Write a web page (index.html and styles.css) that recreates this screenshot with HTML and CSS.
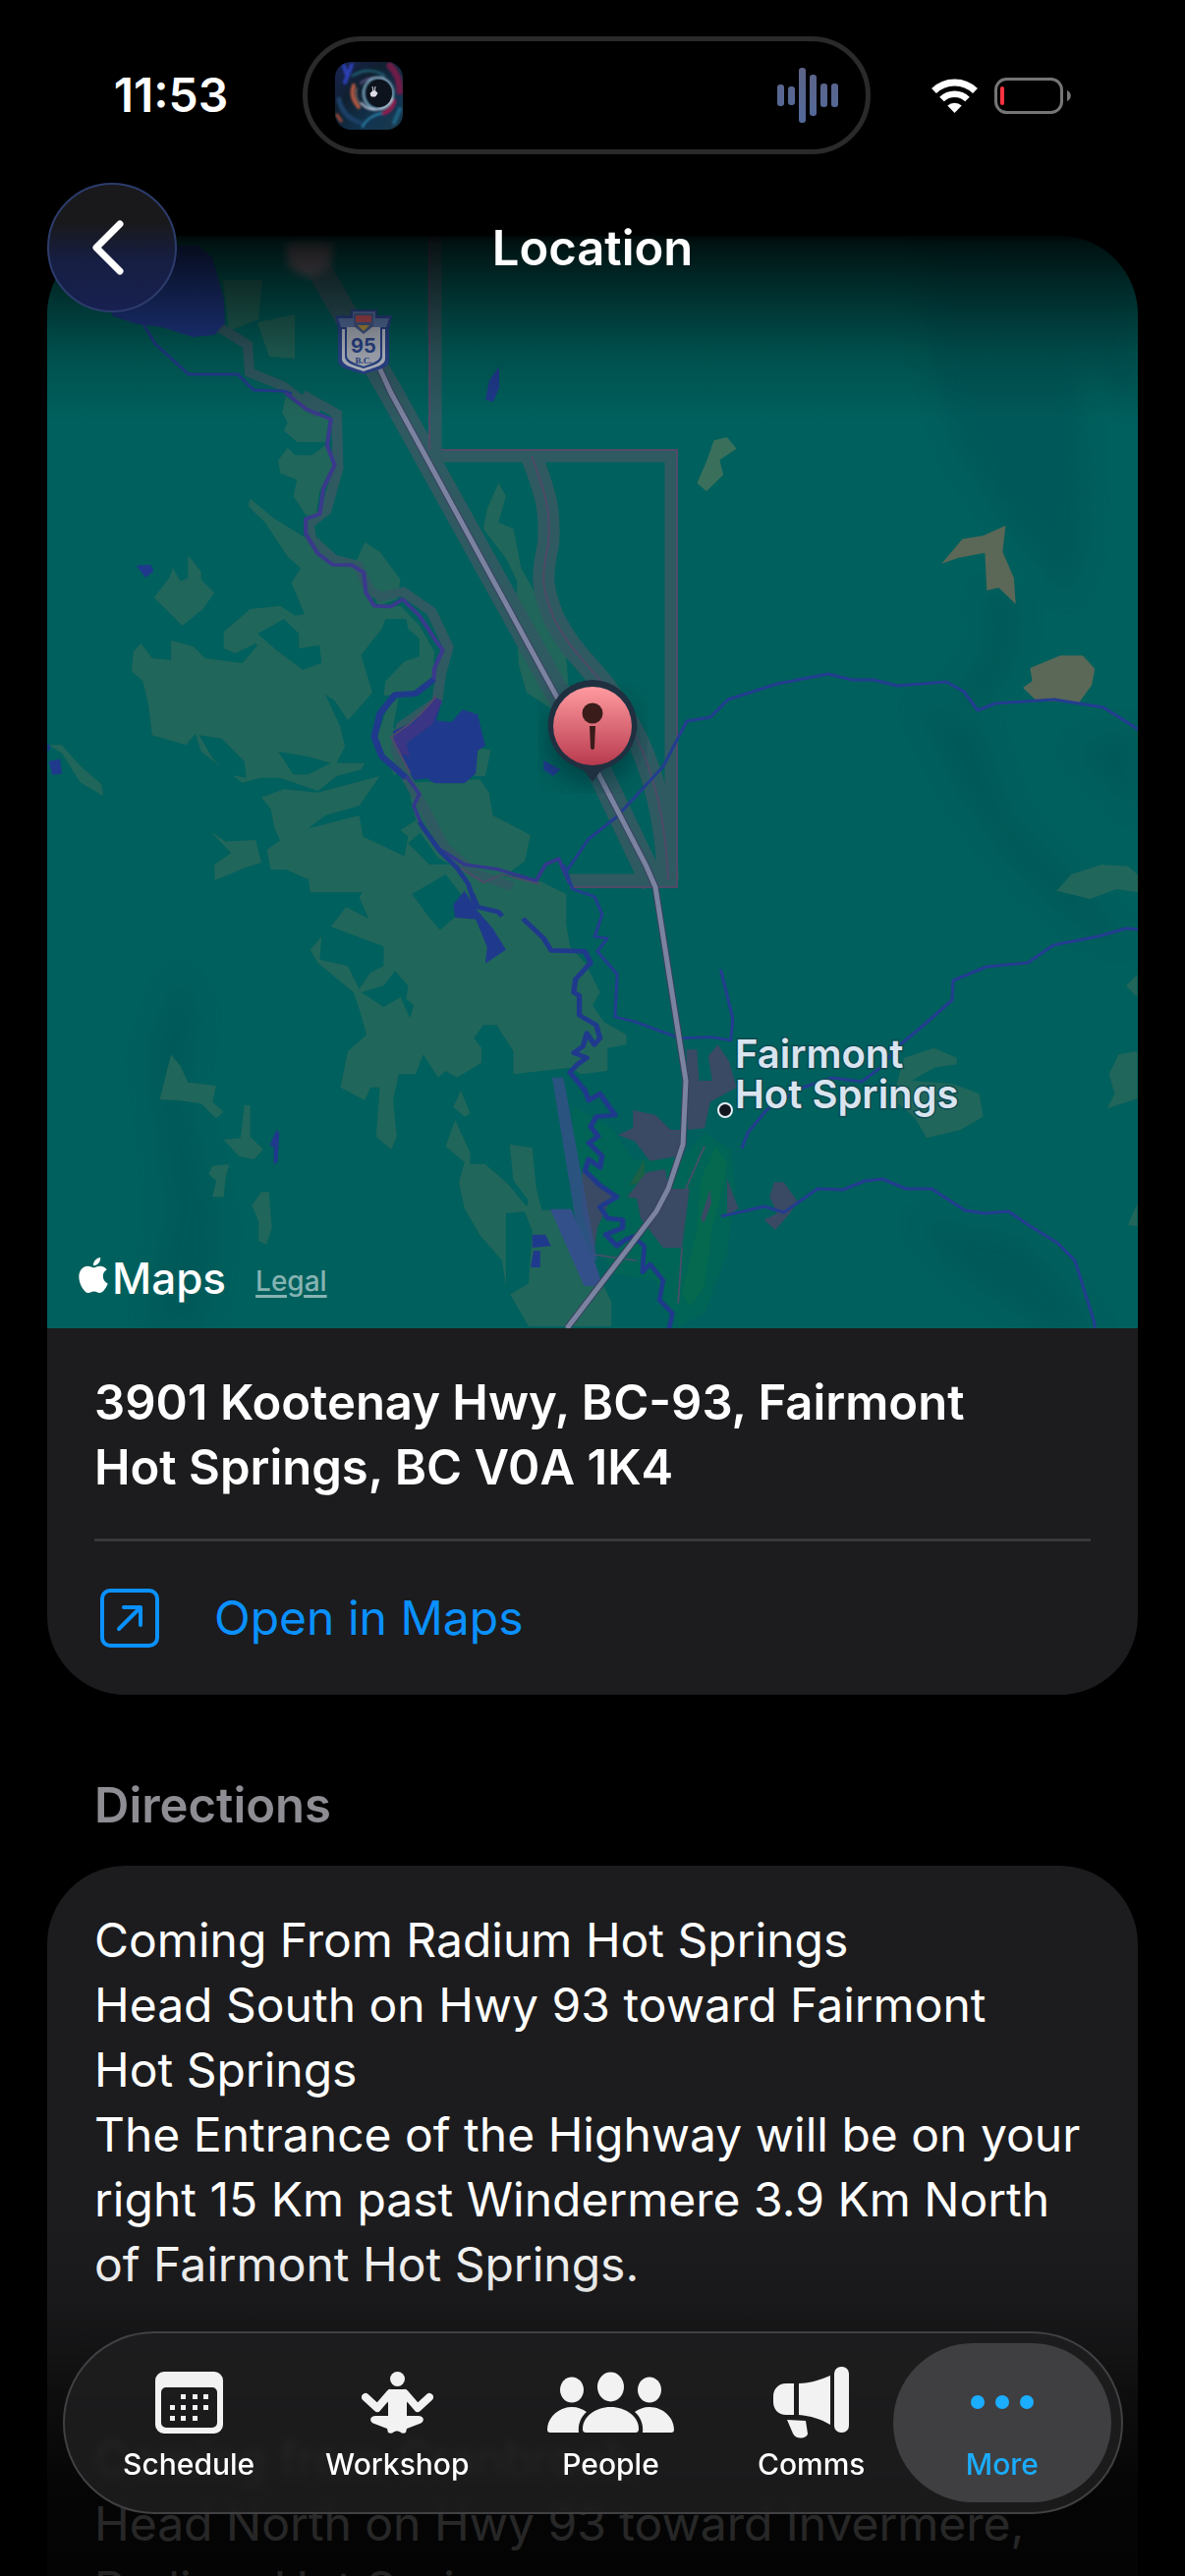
FILE: index.html
```html
<!DOCTYPE html>
<html lang="en">
<head>
    <meta charset="UTF-8">
    <meta name="viewport" content="width=device-width, initial-scale=1.0">
    <title>Location</title>
    <link rel="stylesheet" href="styles.css">
</head>
<body>
<div class="screen">

    <!-- Status bar and title, float over the scrolled content -->
    <header class="top">
        <div class="status">
            <span class="time">11:53</span>
            <div class="island">
                <svg class="album" viewBox="0 0 69 69" aria-hidden="true">
                    <defs>
                        <linearGradient id="art" x1="0" y1="0" x2="1" y2="1">
                            <stop offset="0" stop-color="#1a2456"/>
                            <stop offset="0.35" stop-color="#10202f"/>
                            <stop offset="0.7" stop-color="#123450"/>
                            <stop offset="1" stop-color="#1c3a4c"/>
                        </linearGradient>
                        <filter id="artBlur"><feGaussianBlur stdDeviation="1.2"/></filter>
                    </defs>
                    <rect width="69" height="69" fill="url(#art)"/>
                    <g filter="url(#artBlur)" fill="none" stroke-linecap="round">
                        <path d="M9 4l3 10M17 3l-7 18" stroke="#2c3fb4" stroke-width="4"/>
                        <path d="M56 4c8 8 10 18 10 26" stroke="#6c1a46" stroke-width="7"/>
                        <path d="M19 24c-3 7-1 15 5 22" stroke="#b4573f" stroke-width="4"/>
                        <path d="M22 27c-2 6 0 12 4 16" stroke="#d99a80" stroke-width="1"/>
                        <path d="M4 38c2 12 10 20 22 24" stroke="#1c3f66" stroke-width="5"/>
                        <path d="M2 54l4 6" stroke="#a44a36" stroke-width="3"/>
                        <path d="M28 66c4-8 10-12 20-14" stroke="#2f86b0" stroke-width="2"/>
                        <path d="M60 62l6-14" stroke="#1f6484" stroke-width="4"/>
                        <path d="M50 52c6-2 9-8 10-12" stroke="#8c1f50" stroke-width="5"/>
                        <path d="M18 14c12-7 24-6 32 0" stroke="#1d5468" stroke-width="3"/>
                        <path d="M26 22c8-8 22-8 30 0" stroke="#5a5088" stroke-width="2"/>
                        <ellipse cx="44" cy="32" rx="15" ry="16" stroke="#8fb8cc" stroke-width="2"/>
                        <path d="M27 42c7 9 24 10 31-6" stroke="#c9d2e6" stroke-width="2"/>
                    </g>
                    <ellipse cx="45" cy="32" rx="13" ry="14" fill="#0c131c"/>
                    <path d="M38 25l1 6M41 25l-1 6M36 32c2-3 6-3 7 0l-2 3h-4z" stroke="#dcdce6" fill="#dcdce6"/>
                </svg>
                <svg class="wave" viewBox="0 0 62 56" aria-hidden="true">
                    <defs>
                        <linearGradient id="waveFill" x1="0" y1="0" x2="0" y2="56" gradientUnits="userSpaceOnUse">
                            <stop offset="0" stop-color="#5d6488"/>
                            <stop offset="1" stop-color="#52699a"/>
                        </linearGradient>
                    </defs>
                    <g fill="url(#waveFill)">
                        <rect x="0" y="17" width="7" height="22" rx="3"/>
                        <rect x="11" y="19" width="7" height="19" rx="3"/>
                        <rect x="22" y="0" width="7" height="56" rx="3"/>
                        <rect x="33" y="7" width="7" height="42" rx="3"/>
                        <rect x="44" y="16" width="7" height="24" rx="3"/>
                        <rect x="55" y="16" width="7" height="24" rx="3"/>
                    </g>
                </svg>
            </div>
            <div class="signals">
                <svg class="wifi" viewBox="0 0 47 35" aria-hidden="true">
                    <g fill="none" stroke="#fff">
                        <path d="M2.500 12.500A30 30 0 0 1 44.500 12.500" stroke-width="7"/>
                        <path d="M10.500 21A18.500 18.500 0 0 1 36.500 21" stroke-width="6.500"/>
                    </g>
                    <path d="M23.500 35l-7.200-7.500a10.500 10.500 0 0 1 14.400 0z" fill="#fff"/>
                </svg>
                <svg class="battery" viewBox="0 0 78 37" aria-hidden="true">
                    <rect x="1.500" y="1.500" width="67" height="34" rx="11" fill="none" stroke="#757575" stroke-width="3"/>
                    <rect x="6" y="9" width="4" height="19" rx="2" fill="#ff3340"/>
                    <path d="M74 13c5 2 5 9 0 11z" fill="#757575"/>
                </svg>
            </div>
        </div>

        <div class="nav">
            <button class="back" type="button" aria-label="Back">
                <svg viewBox="0 0 34 58" aria-hidden="true"><path d="M29 5L5 29l24 24" fill="none" stroke="#fff" stroke-width="7" stroke-linecap="round" stroke-linejoin="round"/></svg>
            </button>
            <h1>Location</h1>
        </div>
    </header>

    <main class="content">
        <section class="card">
            <div class="map">
                <svg viewBox="48 240 1110 1112" role="img" aria-label="Map of Fairmont Hot Springs">
                    <defs>
                        <linearGradient id="pin" x1="0" y1="0" x2="0" y2="1">
                            <stop offset="0" stop-color="#ff9ba0"/>
                            <stop offset="1" stop-color="#b83a4e"/>
                        </linearGradient>
                        <filter id="soft"><feGaussianBlur stdDeviation="12"/></filter>
                        <filter id="haze"><feGaussianBlur stdDeviation="4"/></filter>
                    </defs>
                    <rect x="48" y="240" width="1110" height="1112" fill="#00605d"/>

                    <!-- hill shading -->
                    <g fill="#013f48" opacity="0.2" filter="url(#soft)">
                        <path d="M940 240h218v180l-60-60 10 190-20 60-60-70-60-90-30-130z"/>
                        <path d="M1000 600l40 10-6 60-30 50-40-8 40-50z"/>
                        <path d="M930 712l70 30 30 90 70 70 50 60-40-10-80-70-50-70z"/>
                        <path d="M1090 760l68-20v90l-30-30z"/>
                        <path d="M180 990l24 40-14 80 34 140-14 100-60 0 20-120-20-160z"/>
                        <path d="M930 1240l110 20 80 92-60 0-90-60z"/>
                    </g>

                    <!-- farmland and forest patches -->
                    <g fill="#21665b">
                        <path d="M227 285h40l-4 40-30 12zM262 328l38-8v45l-26-2z"/>
                        <g transform="translate(40 400) scale(.383 .3333)">
                            <path d="M655 10l60 50 55 20-10 70-75 0-35-35 10-25-15-30z"/>
                            <path d="M660 168l20 22 45 0 35-30 20 60-35 80-10 70-25 5-35-60 10-50-45-20-5-40z"/>
                            <path d="M560 322L620 380 705 440 745 500 830 530 862 560 870 620 900 655 960 650 1010 710 1050 790 1045 870 990 915 915 925 920 880 970 820 1010 805 1010 750 980 720 975 690 920 690 910 720 855 800 885 915 820 1000 785 940 760 920 800 1020 812 1080 790 1130 865 1130 855 1150 790 1170 740 1215 690 1195 640 1175 590 1175 540 1190 480 1140 430 1095 415 1040 390 1075 300 1045 290 950 275 880 245 850 250 790 270 765 300 810 350 815 350 755 410 775 440 810 540 825 580 770 575 765 520 795 490 780 490 730 560 660 640 650 680 680 705 675 670 580 695 535 660 500 600 395 555 345z"/>
                            <path d="M395 495l35 50 0 25 35 40-30 50-55 50-75-85 40-60 10-30 20 40 20-10z"/>
                            <path d="M865 455l40 30 55 85-10 60-50 20-30-100-30-30z"/>
                            <path d="M25 1075l35 0 45 60 60 60 5 35-60-40-50-90z"/>
                            <path d="M590 1235l60-25 90 10 165-50-55 90-90 30-40 35-30 70-40-5-25-60-10-60z"/>
                            <path d="M850 1290l10 65 110 60 10-60-20-20 40-30 20 30-40 40 60 70 50 20 50 60-420 0-5-40-60-30-40 0-10-60 60-50z"/>
                            <path d="M955 930l-30 30-30 100 50 110 30-100-35-50z"/>
                            <path d="M980 1190l190-10 25 40 10 70 100 60-15 80-60 50-90-10-80-50-50-80-20-80z"/>
                            <path d="M455 1340l40 30 80-5 15 70-60 20-60 30-5-45 45-35z"/>
                            <path d="M1220 275l20 40-20 80 40 20 20 120 30 60 90 200 5 90 30 80-60 10-80-60-20-80-10-140 5-120-30-70-60-90 10-60z"/>
                            <path d="M1165 1085l35 5-15 80-30 0z"/>
                        </g>
                        <g transform="translate(40 880) scale(.383 .3333)">
                            <path d="M465 10l40-20 80 0-60 30-58 28z"/>
                            <path d="M1100 0L1180 30 1330 50 1400 90 1400 180 1410 250 1450 300 1490 390 1470 430 1500 480 1560 520 1560 550 1510 560 1510 630 1440 640 1410 620 1260 640 1260 570 1215 490 1180 490 1155 530 1175 560 1175 605 1110 650 1080 630 1060 650 1020 580 1000 640 955 640 940 720 950 830 935 870 895 830 905 680 880 680 865 720 800 680 820 570 870 520 850 440 835 390 740 300 720 260 750 220 745 290 820 310 850 380 880 330 915 310 915 250 775 190 815 130 875 165 850 100 870 65 800 20 740 0z"/>
                            <path d="M350 580l25 35 20 50 75 10-10 50 30 30-20 20-40-45-60-10-50-2z"/>
                            <path d="M545 735h15v95l35 40-25 30-40-10-40-50 45-5z"/>
                            <path d="M505 915l-10 40-5 60-30 0 10-50-20-20 10-25z"/>
                            <path d="M590 1000l20 0 8 110-15 50-20-10 0-60-18-50z"/>
                            <path d="M1120 690l25 70-15 10-30-30zM1105 780l20 50 20 50 0 35 40 0 60 60 50 70 5-20-40-60-10-110 60 10 10 120 15 70 55 0 40 120 60 90 30 70 0 75-220 0-20-40-40-80-10-80-60-80-40-80-15-80 15-60-50-50z"/>
                        </g>
                        <g transform="translate(560 880) scale(.383 .3333)">
                            <path d="M1345 80l40-50 80-30 70 5 30 30v50l-60-10-70 30z"/>
                            <path d="M940 590l80-30 60 30 0 20-60 10-60 40 110 10 70 30 10 70-60 40-90 25-30-60-60-60z"/>
                            <path d="M1560 570l-50 10-25 60 15 60-20 45 80-30zM1560 335l-30 35 30 35zM1560 1035l-25 65 25 5z"/>
                        </g>
                    </g>
                    <!-- clearings inside the farmland -->
                    <g fill="#00605d">
                        <g transform="translate(40 400) scale(.383 .3333)">
                            <path d="M425 1045l60 10 60 70 5 50-50-10-40-50z"/>
                            <path d="M635 1095l80 15 60 20-60 35-40 0z"/>
                            <path d="M580 735l70-45 40 45 0 45 55-10 5 55-50 20-70-60z"/>
                        </g>
                        <g transform="translate(40 880) scale(.383 .3333)">
                            <path d="M990 90l90-60 40 60-5 60-50 50-30-40z"/>
                            <path d="M855 390l60-20 30-45 35 45-5 40 20 20-10 40-25-65-45 30z"/>
                            <path d="M1240 1065l50-5 20 60-10 160-60 40z"/>
                        </g>
                    </g>
                    <g transform="translate(560 400) scale(.383 .3333)">
                        <path d="M435 145l35-10 25 35-45 35 10 45-45 50-25-25 25-65z" fill="#3a705b"/>
                        <path d="M1210 405l-8 80 30 80 5 80-45-50-32 8-5-115-70 15-45 18 55-75 55-10z" fill="#5b6857"/>
                        <path d="M1275 840l80-38 60 0 32 40-8 50-35 55-60-5-50 0-38-42 25-20z" fill="#5b6857"/>
                    </g>

                    <!-- golf course and town -->
                    <g transform="translate(560 880) scale(.383 .3333)">
                        <path d="M60 740l100 60 60 100 130 0 60-80 70 50 10 120-20 200-60 180-70 40-60-140-110-20-60-110-50-250z" fill="#006457"/>
                        <path d="M440 860l30 50-10 80-30 120-20 180-40 60-20-40 40-200 10-150z" fill="#04694f"/>
                        <path d="M250 900l-40 80 60-20 60 50 60-40-50 40-60-20-30-40z" fill="#1c6046"/>
                        <g fill="#3a4a64">
                            <path d="M362 565h28l5 95 35 0-10-75 25-35 30 50 20 80-70 45-15 80-45 5z"/>
                            <path d="M220 750l60 15 40 45 30 0-10 80-75 15-40-60-45-20 40-20z"/>
                            <path d="M255 940l50-10 10 60 55 0-20 180-50 0-60-90-10-60-25-5z"/>
                            <path d="M85 930l80 80-40 100-10 90-30-150z"/>
                            <path d="M470 960l30 90-30 20zM595 970l25 0 38 60-25 40-35 45-30-30 35-20-20-50zM425 990l-25 90 8 15 20-60z"/>
                        </g>
                        <path d="M410 860l-50 130M350 1170l-10 170M110 1190l120 20" fill="none" stroke="#45506a" stroke-width="5"/>
                        <path d="M0 1052h55l60 150 25 85-50 0z" fill="#34508a"/>
                        <path d="M5 650h30l90 560-40 0z" fill="#34508a" opacity="0.8"/>
                    </g>

                    <!-- park borders -->
                    <g fill="none" stroke="#2f5a62">
                        <path d="M443 240v224h240v432H580" stroke-width="13"/>
                        <path d="M325 275l73 125 205 370 62 130" stroke-width="25"/>
                        <path d="M541 464c12 34 20 50 17 90-8 36-6 46 6 76 12 24 24 36 50 66 26 36 62 90 66 200" stroke-width="22"/>
                        <path d="M223 333l29 18 2 28 34 14 36 28" stroke-width="10"/>
                        <path d="M700 5l90 58 4 167-32 130-45 40 5 45 60 62 65 20 30 75 30 20 60-15 75 60 45 110-20 80-10 85-95 75-15 70 30 90 40 80 60 130 80 80 100 40" transform="translate(40 400) scale(.383 .3333)" stroke-width="28"/>
                    </g>
                    <g fill="none" stroke="#514a68" stroke-width="2">
                        <path d="M437 240v218M449 458h240v445H580"/>
                        <path d="M541 464c12 34 20 50 17 90-8 36-6 46 6 76 12 24 24 36 50 66 26 36 62 90 66 200"/>
                    </g>

                    <!-- lakes -->
                    <g fill="#1f3a8c">
                        <path d="M90 250h112l14 12 12 43 1 24-11 12-22 2-31-10-25-3-25-8z"/>
                        <path d="M508 373v22l-6 14-8-2 4-20z"/>
                        <g transform="translate(40 400) scale(.383 .3333)">
                            <path d="M1050 930l20 10-15 60 40 5 30-38 40 15 20 95-20 15-5 70-30 30-80 0-20-15-35 5-50-110-5-40 40-20 50-40z"/>
                            <path d="M1050 930l20 10-25 70-70 60 10 40-30-10-15-40 10-30 45-20z" fill="#3a3584"/>
                            <path d="M258 527l38-3 8 20-22 20zM1340 1122l45 28-20 20-25-20zM22 1070l8 10-8 20zM25 1125l30-8 5 45-25 5z"/>
                        </g>
                        <g transform="translate(40 880) scale(.383 .3333)">
                            <path d="M1130 80l30 55 45 60 35 65-55 42 5-50-30-85-55-5-5-40z"/>
                            <path d="M630 810l8 10-5 90-10 5 0-50-10-10zM1310 1130l35 0 15 35-50 5zM1313 1180h18v50h-25z"/>
                        </g>
                    </g>

                    <!-- rivers -->
                    <g fill="none" stroke="#233d90" stroke-width="3" stroke-linejoin="round">
                        <path d="M146 330l12 20 34 31 50 0 16 16 30 1 9 3"/>
                        <path d="M577 886l22-32 28-22 48-52 24-46 24-4 18-18 50-16 52-10 24 6 22 0 24 6 50-4 18 10 14 19 18-7 60-4 50 8 38 24"/>
                        <path d="M1158 946l-12-1-28 8-46 9-26 18-42 4-34 14-1 20-32 28-24 20-16 20-20 15-30-4-30 10-36 22-20 24-6 16"/>
                        <path d="M734 1238l44-10 20 6 34-24 26 1 22-9 18-2 24 10 26 0 34 22 20 3 24-2 24 16 26 16 18 18 20 64 1 40"/>
                    </g>
                    <g transform="translate(40 400) scale(.383 .3333)" fill="none" stroke-linejoin="round">
                        <path d="M655 0L710 50 775 80 765 160 785 220 755 290 745 370 708 385 708 430 740 490 780 525 830 525 862 548 868 610 890 650 935 652 965 630 1010 680 1050 750 1072 785 1050 840 1048 880" stroke="#3a3a8c" stroke-width="11"/>
                        <path d="M1048 875L1000 918 945 922 905 980 890 1050 910 1110 975 1175" stroke="#1f3a8c" stroke-width="18"/>
                        <path d="M975 1170L1010 1225 995 1260 1020 1330 1060 1390 1130 1440 1220 1455 1320 1490 1345 1440 1380 1422 1410 1500" stroke="#33398c" stroke-width="10"/>
                        <path d="M1010 1310L1065 1400 1110 1450 1140 1500 1160 1570" stroke="#1f3a8c" stroke-width="13"/>
                        <path d="M1055 925L1030 960 985 1010 935 1050 985 1160 M1120 1450L1180 1495 1230 1470 1330 1500" stroke="#514a68" stroke-width="5"/>
                    </g>
                    <g transform="translate(40 880) scale(.383 .3333)" fill="none" stroke="#1f3a8c" stroke-width="14" stroke-linejoin="round">
                        <path d="M1150 90L1165 130 1220 145 1230 158"/>
                        <path d="M1285 165L1340 225 1360 262 1450 265 1465 300 1425 350 1420 390 1435 400 1435 460 1480 490 1490 530 1475 550 1455 515 1445 555 1420 575 1455 590 1430 610 1410 635 1450 690 1460 720 1490 700 1530 765 1480 770 1465 800 1485 830 1460 850 1495 890 1490 925 1460 900 1450 935 1490 980 1535 1015 1490 1045 1510 1080 1550 1085 1550 1110 1505 1130 1535 1165 1565 1140"/>
                    </g>
                    <g transform="translate(560 880) scale(.383 .3333)" fill="none" stroke="#1f3a8c" stroke-linejoin="round">
                        <path d="M170 1165L220 1135 250 1165 245 1245 265 1220 300 1270 290 1330 325 1370 315 1420" stroke-width="12"/>
                        <path d="M35 0L60 75 118 98 138 152 118 220 152 225 125 265 178 335 172 465 225 480 345 530 430 527 480 537 485 470 453 320" stroke="#233d90" stroke-width="8"/>
                    </g>

                    <!-- highway -->
                    <path d="M385 372l13 28 205 376 54 104 10 23 31 197-3 65-15 45-12 23-91 119" fill="none" stroke="#3b4060" stroke-width="7"/>
                    <path d="M385 372l13 28 205 376 54 104 10 23 31 197-3 65-15 45-12 23-91 119" fill="none" stroke="#7a839f" stroke-width="5"/>
                    <path d="M292 246h46v18c0 8-10 14-23 18-13-4-23-10-23-18z" fill="#7a7480" filter="url(#haze)"/>

                    <!-- highway 95 shield -->
                    <path d="M357 315h27v6h15l-3 14v32c0 8-14 10-26 14-12-4-26-6-26-14v-32l-3-14h16z" fill="#2b478f"/>
                    <path d="M359 317h23v7h14l-3 9H347l-3-9h15z" fill="#5a76a8"/>
                    <path d="M348 335h44v30c0 7-11 9-22 13-11-4-22-6-22-13z" fill="#c2c8d4"/>
                    <path d="M351 335h38v28c0 6-9 9-19 12-10-3-19-6-19-12z" fill="#2b478f"/>
                    <path d="M353 333h34v29c0 5-8 8-17 11-9-3-17-6-17-11z" fill="#b4bac6"/>
                    <path d="M360 319h20v13l-10 8-10-8z" fill="#4a5f92"/>
                    <path d="M362 321h16v7h-16z" fill="#b8505a"/>
                    <path d="M364 331h12l-6 6z" fill="#b8983e"/>
                    <text class="shield-number" x="370" y="359">95</text>
                    <text class="shield-province" x="370" y="370">B.C.</text>

                    <!-- town label -->
                    <circle cx="738" cy="1130" r="7" fill="#14161f" stroke="#e8eef6" stroke-width="2"/>
                    <text class="town" x="748" y="1087">Fairmont</text>
                    <text class="town" x="748" y="1128">Hot Springs</text>

                    <!-- pin -->
                    <circle cx="603" cy="752" r="46" fill="#02282f" opacity="0.5" filter="url(#soft)"/>
                    <path d="M603 692a46 46 0 0 1 18 88l-10 5-8 11-8-11-10-5a46 46 0 0 1 18-88z" fill="#1f3040"/>
                    <circle cx="603" cy="739" r="40" fill="url(#pin)"/>
                    <circle cx="603" cy="726" r="10.500" fill="#3a1c1a"/>
                    <path d="M600 739h6l-1 22a2 2 0 0 1-4 0z" fill="#3a1c1a"/>
                </svg>
                <div class="credits">
                    <svg class="apple" viewBox="2 0 20 24" aria-hidden="true"><path fill="#fff" d="M12.152 6.896c-.948 0-2.415-1.078-3.960-1.040-2.040.027-3.910 1.183-4.961 3.014-2.117 3.675-.546 9.103 1.519 12.090 1.013 1.454 2.208 3.090 3.792 3.039 1.520-.065 2.090-.987 3.935-.987 1.831 0 2.350.987 3.960.948 1.637-.026 2.676-1.480 3.676-2.948 1.156-1.688 1.636-3.325 1.662-3.415-.039-.013-3.182-1.221-3.220-4.857-.026-3.040 2.480-4.494 2.597-4.559-1.429-2.090-3.623-2.324-4.390-2.376-2-.156-3.675 1.090-4.610 1.090zM15.530 3.830c.843-1.012 1.400-2.427 1.245-3.830-1.207.052-2.662.805-3.532 1.818-.780.896-1.454 2.338-1.273 3.714 1.338.104 2.715-.688 3.559-1.701"/></svg>
                    <span class="brand">Maps</span>
                    <a class="legal" href="#">Legal</a>
                </div>
            </div>
            <p class="address">3901 Kootenay Hwy, BC-93, Fairmont<br>Hot Springs, BC V0A 1K4</p>
            <a class="open" href="#">
                <svg viewBox="0 0 60 60" aria-hidden="true">
                    <g fill="none" stroke="#0a91ff" stroke-width="4" stroke-linecap="round" stroke-linejoin="round">
                        <rect x="2" y="2" width="56" height="56" rx="8"/>
                        <path d="M19 41l22-22M24 19h17v18"/>
                    </g>
                </svg>
                Open in Maps
            </a>
        </section>

        <h2>Directions</h2>

        <section class="card directions">
            <p>Coming From Radium Hot Springs<br>Head South on Hwy 93 toward Fairmont<br>Hot Springs<br>The Entrance of the Highway will be on your right 15 Km past Windermere 3.9 Km North of Fairmont Hot Springs.</p>
            <p>Coming from Cranbrook<br>Head North on Hwy 93 toward Invermere, Radium Hot Springs</p>
        </section>
    </main>

    <div class="fade"></div>

    <!-- Tab bar -->
    <nav class="tabs">
        <a href="#">
            <span class="icon"><svg width="69" height="63" viewBox="0 0 69 63" aria-hidden="true">
                <path fill="#f2f2f3" fill-rule="evenodd" d="M9 0h51a9 9 0 0 1 9 9v45a9 9 0 0 1-9 9H9a9 9 0 0 1-9-9V9a9 9 0 0 1 9-9zM11 16a5 5 0 0 0-5 5v31a5 5 0 0 0 5 5h47a5 5 0 0 0 5-5V21a5 5 0 0 0-5-5z"/>
                <path fill="#f2f2f3" d="M26 23h5v5h-5zM38 23h5v5h-5zM49 23h5v5h-5zM15 34h5v5h-5zM26 34h5v5h-5zM38 34h5v5h-5zM49 34h5v5h-5zM15 45h5v5h-5zM26 45h5v5h-5zM38 45h5v5h-5z"/>
            </svg></span>
            Schedule
        </a>
        <a href="#">
            <span class="icon"><svg width="73" height="63" viewBox="0 0 73 63" aria-hidden="true">
                <circle cx="36.500" cy="7.500" r="7.500" fill="#f2f2f3"/>
                <path d="M28 18h17l4 5-3 9v13l10 0c8-1 9 6 3 8l-13 5-1 4c-2 1-4 1-5 0-2-2-6-2-8 0-1 1-3 1-5 0l-1-4-13-5c-6-2-5-9 3-8l11 0V32l-3-9z" fill="#f2f2f3"/>
                <path d="M4 26l12 11 13-15M69 26L57 37 44 22" fill="none" stroke="#f2f2f3" stroke-width="8" stroke-linecap="round" stroke-linejoin="round"/>
            </svg></span>
            Workshop
        </a>
        <a href="#">
            <span class="icon"><svg width="129" height="63" viewBox="0 0 129 63" aria-hidden="true">
                <g fill="#f2f2f3">
                    <ellipse cx="64.500" cy="15.500" rx="13.500" ry="15"/>
                    <ellipse cx="25" cy="18.500" rx="12" ry="13"/>
                    <ellipse cx="104" cy="18.500" rx="12" ry="13"/>
                    <path d="M40 62c-3 0-4-1-4-4 0-12 13-22 28.500-22S93 46 93 58c0 3-1 4-4 4z"/>
                    <path d="M3 62c-2 0-3-1-3-3 0-12 11-23 25-23 6 0 11 2 15 5-6 5-9 13-8 21z"/>
                    <path d="M126 62c2 0 3-1 3-3 0-12-11-23-25-23-6 0-11 2-15 5 6 5 9 13 8 21z"/>
                </g>
            </svg></span>
            People
        </a>
        <a href="#">
            <span class="icon"><svg width="77" height="73" viewBox="0 0 77 73" aria-hidden="true">
                <g fill="#f2f2f3">
                    <rect x="62" y="0" width="15" height="67" rx="7"/>
                    <path d="M26 17c12 0 22-4 32-8v50c-10-6-20-9-32-10zM21 17v32H13C5 49 0 43 0 36v-6c0-7 5-13 13-13zM14 54l19 1 2 13c0 5-12 7-15 0z"/>
                </g>
            </svg></span>
            Comms
        </a>
        <a class="active" href="#" aria-current="page">
            <span class="icon"><svg width="64" height="14" viewBox="0 0 64 14" aria-hidden="true">
                <g fill="#1badff">
                    <circle cx="7" cy="7" r="7"/>
                    <circle cx="32" cy="7" r="7"/>
                    <circle cx="57" cy="7" r="7"/>
                </g>
            </svg></span>
            More
        </a>
    </nav>
</div>
</body>
</html>
```

FILE: styles.css
```css
* {
    margin: 0;
    padding: 0;
    box-sizing: border-box;
}

body {
    background: #000;
    color: #fff;
    font-family: Inter, "Noto Sans", sans-serif;
    font-size: 48px;
    line-height: 66px;
}

a {
    color: inherit;
    text-decoration: none;
}

svg {
    display: block;
}

.screen {
    position: relative;
    height: 100vh;
    overflow: hidden;
}

/* Status bar and title */
.top {
    position: absolute;
    top: 0;
    left: 0;
    right: 0;
    z-index: 2;
    padding: 37px 0 110px;
    background: linear-gradient(#000 236px, rgba(0, 0, 0, 0.8) 248px, rgba(0, 0, 0, 0.5) 300px, rgba(0, 0, 0, 0.18) 360px, transparent);
}

.status {
    display: grid;
    grid-template-columns: 308fr 578fr 320fr;
    align-items: center;
}

.time {
    padding-left: 40px;
    font-size: 48px;
    font-weight: 600;
    text-align: center;
}

.island {
    display: flex;
    justify-content: space-between;
    align-items: center;
    height: 120px;
    padding: 0 28px;
    border: 5px solid #2a2a2a;
    border-radius: 60px;
}

.album {
    width: 69px;
    height: 69px;
    border-radius: 16px;
}

.wave {
    width: 62px;
    height: 56px;
}

.signals {
    display: flex;
    justify-content: center;
    align-items: center;
    gap: 17px;
    padding-right: 54px;
}

.wifi {
    width: 47px;
    height: 35px;
}

.battery {
    width: 78px;
    height: 37px;
}

.nav {
    display: grid;
    grid-template-columns: 132px 1fr 132px;
    align-items: center;
    margin-top: 29px;
    padding: 0 48px;
}

.back {
    display: flex;
    justify-content: center;
    align-items: center;
    height: 132px;
    padding-right: 8px;
    border: 2px solid #2c3c6c;
    border-radius: 50%;
    background: linear-gradient(#19191b 30%, #161e42 60%, #172050);
    cursor: pointer;
}

.back svg {
    width: 34px;
    height: 58px;
}

h1 {
    padding-top: 2px;
    font-size: 49px;
    font-weight: 600;
    text-align: center;
}

/* Cards */
.content {
    padding: 240px 48px 0;
}

.card {
    overflow: hidden;
    border-radius: 80px;
    background: #1c1c1e;
}

.map {
    position: relative;
}

.map > svg {
    width: 100%;
    height: auto;
}

.town {
    fill: #d9e4ef;
    stroke: #0d4a50;
    stroke-width: 3px;
    paint-order: stroke;
    font-size: 40px;
    font-weight: 600;
}

.shield-number {
    fill: #2b478f;
    font-size: 20px;
    font-weight: 700;
    text-anchor: middle;
}

.shield-province {
    fill: #2b478f;
    font-family: "Liberation Serif", serif;
    font-size: 9px;
    font-weight: 700;
    text-anchor: middle;
}

.credits {
    position: absolute;
    left: 32px;
    bottom: 20px;
    display: flex;
    align-items: center;
    line-height: 56px;
}

.apple {
    width: 30px;
    height: 36px;
    margin-bottom: 6px;
}

.brand {
    margin: 0 30px 0 4px;
    font-size: 44px;
    font-weight: 500;
}

.legal {
    padding-top: 6px;
    color: #86b3b2;
    font-size: 28px;
    font-weight: 500;
    text-decoration: underline;
    text-decoration-thickness: 3px;
    text-underline-offset: 4px;
}

.address {
    margin: 0 48px;
    padding: 43px 0 39px;
    border-bottom: 3px solid #38383a;
    font-size: 49px;
    font-weight: 600;
}

.open {
    display: flex;
    align-items: center;
    gap: 56px;
    padding: 45px 54px;
    color: #0a91ff;
}

.open svg {
    width: 60px;
    height: 60px;
}

h2 {
    margin: 80px 48px 28px;
    color: #8d8d93;
    font-size: 49px;
    font-weight: 600;
}

.directions {
    padding: 43px 48px;
}

.directions p + p {
    margin-top: 132px;
}

/* Bottom fade under the tab bar */
.fade {
    position: absolute;
    left: 0;
    right: 0;
    bottom: 0;
    height: 360px;
    background: linear-gradient(transparent, rgba(0, 0, 0, 0.15) 25%, rgba(0, 0, 0, 0.5) 48%, rgba(0, 0, 0, 0.84) 78%, rgba(0, 0, 0, 0.86));
}

.tabs {
    position: absolute;
    left: 64px;
    right: 63px;
    bottom: 63px;
    display: grid;
    grid-template-columns: 232fr 192fr 242fr 166fr 222fr;
    padding: 10px;
    border: 2px solid #414144;
    border-radius: 93px;
    background: rgba(30, 30, 32, 0.86);
    backdrop-filter: blur(4px);
}

.tabs a {
    display: flex;
    flex-direction: column;
    align-items: center;
    gap: 6px;
    padding: 21px 0;
    border-radius: 81px;
    font-size: 30px;
    font-weight: 500;
    line-height: 36px;
}

.icon {
    display: flex;
    align-items: center;
    height: 78px;
}

.tabs .active {
    background: #3f3f41;
    color: #1badff;
}
```
